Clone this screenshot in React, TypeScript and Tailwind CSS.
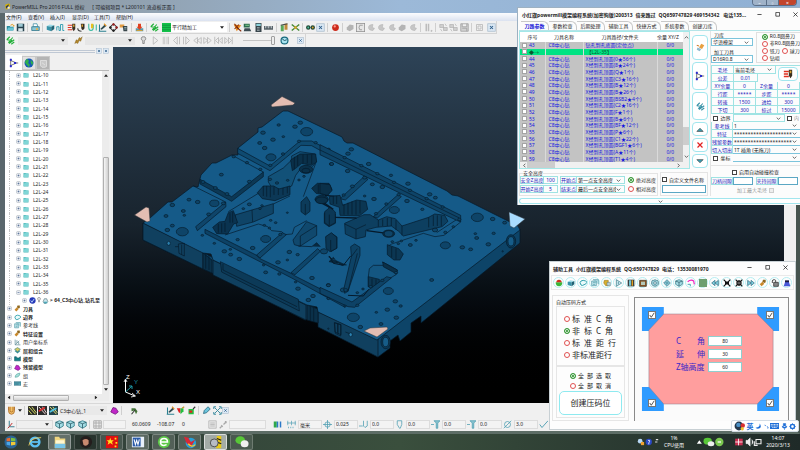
import React from "react";

/* ---------- small glyphs, all drawn on a 12 x 12 grid ---------- */

const glyphs: Record<string, React.ReactNode> = {
  logo: (
    <>
      <path d="M2 3l6-2 3 2-2 7-6 1z" fill="#d8b400" />
      <path d="M3 6l5-4v4l-4 4z" fill="#333a55" />
      <circle cx="8" cy="8" r="2" fill="#e8e8ee" />
    </>
  ),
  open: (
    <>
      <path d="M1 4h4l1 1h4v5H1z" fill="#2a8a9c" />
      <path d="M3 6h8l-2 4H1z" fill="#67c4d4" />
      <path d="M6 3q3-3 5 1l-2 0" fill="none" stroke="#e09a20" strokeWidth="1.3" />
    </>
  ),
  save: (
    <>
      <rect x="1" y="1" width="10" height="10" fill="#27424e" />
      <rect x="3" y="1" width="6" height="4" fill="#9cc8d4" />
      <rect x="3" y="7" width="6" height="4" fill="#d8e6ea" />
    </>
  ),
  print: (
    <>
      <path d="M3 1h5l1 4H3z" fill="#fff" stroke="#3c8ea4" />
      <path d="M1 5h10v5H1z" fill="#8cc7d6" stroke="#2a7388" />
      <circle cx="8" cy="8" r="1.5" fill="#e9b050" />
    </>
  ),
  block: (
    <>
      <path d="M1 4l4-2 6 1-4 2z" fill="#9ddbe8" />
      <path d="M1 4l6 1v6L1 9z" fill="#3893a8" />
      <path d="M7 5l4-2v5L7 11z" fill="#1f6274" />
    </>
  ),
  feed: <path d="M1 10V5h3v5h2V2h3v8h2" fill="none" stroke="#3aa0b4" strokeWidth="1.3" />,
  toolred: (
    <>
      <path d="M1 3h6M1 6h5M1 9h6" stroke="#e03020" strokeWidth="1.6" />
      <path d="M7 1h4v7l-2 3-2-3z" fill="#3a3022" />
      <path d="M8 2h2v3H8z" fill="#d8a030" />
    </>
  ),
  toolball: (
    <>
      <path d="M5 1h5v6q-2 4-4 1z" fill="#332c22" />
      <path d="M6 2h2v3H6z" fill="#d8a030" />
      <path d="M1 7q0 4 5 4" fill="none" stroke="#444" strokeWidth="1.5" />
    </>
  ),
  leads: (
    <>
      <path d="M1 1v5q0 4 3 4t3-4V2M11 2v8" fill="none" stroke="#38b8a0" strokeWidth="1.4" />
      <path d="M4 1h3v6H4z" fill="#e8c020" />
    </>
  ),
  axis: (
    <>
      <path d="M1 11h10M2 11V2" stroke="#2a8090" strokeWidth="1.4" />
      <path d="M3 8l6-6 2 2-6 5z" fill="#2f4b52" />
      <path d="M8 1l3 3" stroke="#e09020" strokeWidth="1.5" />
    </>
  ),
  points: (
    <>
      <path d="M6 1l5 5-5 5-5-5z" fill="none" stroke="#333" strokeWidth="1.4" />
      <circle cx="6" cy="2" r="1.6" fill="#a02020" />
      <circle cx="10" cy="6" r="1.6" fill="#a02020" />
      <circle cx="6" cy="10" r="1.6" fill="#222" />
      <circle cx="2" cy="6" r="1.6" fill="#222" />
    </>
  ),
  holder: (
    <>
      <path d="M1 2h6v4H1z" fill="#e09a40" />
      <path d="M5 4h6v7H6z" fill="#39464a" />
      <path d="M7 6h3M7 8h3" stroke="#a9c8cf" />
    </>
  ),
  drop: (
    <>
      <path d="M1 7h10v4H1z" fill="#5a98a8" />
      <path d="M4 1h4v4h2L6 9 2 5h2z" fill="#e04020" />
      <path d="M2 10h8" stroke="#d8a030" strokeWidth="1.2" />
    </>
  ),
  zig: <path d="M1 5l4-4M1 5l7 1M3 9l6-7M4 10l7-5M7 11l4-3M3 9l5-3" fill="none" stroke="#22b03a" strokeWidth="1.5" />,
  zigblue: <path d="M1 5l4-4M1 5l7 1M3 9l6-7M4 10l7-5M7 11l4-3M3 9l5-3" fill="none" stroke="#3a93a8" strokeWidth="1.5" />,
  green: (
    <>
      <rect x="0" y="0" width="12" height="12" fill="#13c14a" />
      <path d="M0 3h12M0 6h12M0 9h12" stroke="#0b7a34" strokeWidth=".7" />
    </>
  ),
  verify: (
    <>
      <path d="M1 2l10 1-6 8z" fill="#e88a20" />
      <path d="M2 1l4 6 5 4M8 2l-6 6" stroke="#8a3010" strokeWidth="1.4" />
    </>
  ),
  brush: (
    <>
      <path d="M7 1l4 2-3 5-4-2z" fill="#e8a040" />
      <path d="M2 6l5 2-2 3-4-2z" fill="#8fb8d0" />
      <path d="M1 3l3 1" stroke="#d08030" strokeWidth="1.4" />
    </>
  ),
  sim: (
    <>
      <path d="M1 1h8v5H1z" fill="#2c6d50" />
      <path d="M2 7h7l2 4H1z" fill="#3b4b52" />
      <path d="M3 3h5" stroke="#8bd490" strokeWidth="1.3" />
    </>
  ),
  calc: (
    <>
      <rect x="2" y="0" width="8" height="12" fill="#39464c" />
      <rect x="3" y="1" width="6" height="3" fill="#8ed4dc" />
      <path d="M4 6h4M4 8h4M4 10h4" stroke="#c9d4d8" strokeDasharray="1 .7" />
    </>
  ),
  ruler: (
    <>
      <rect x="0" y="4" width="12" height="5" fill="#59646a" />
      <path d="M2 4v3M4 4v2M6 4v3M8 4v2M10 4v3" stroke="#e4eaec" strokeWidth=".8" />
    </>
  ),
  pair: (
    <>
      <path d="M1 3h4v8H1z" fill="#5aa858" />
      <path d="M6 1h4v8H6z" fill="#c08a3a" />
      <path d="M1 3l9-2" stroke="#444" strokeWidth="1.4" />
    </>
  ),
  cross: (
    <>
      <path d="M1 2l10 8M11 2L1 10" stroke="#4a8a38" strokeWidth="2" />
      <circle cx="6" cy="6" r="2" fill="#d0a830" />
    </>
  ),
  binoc: (
    <>
      <circle cx="3" cy="6" r="3" fill="#234b38" />
      <circle cx="9" cy="6" r="3" fill="#234b38" />
      <circle cx="3" cy="6" r="1.2" fill="#50c0a0" />
      <circle cx="9" cy="6" r="1.2" fill="#e0a030" />
    </>
  ),
  redball: (
    <>
      <circle cx="6" cy="6" r="4.5" fill="#cc2a1a" />
      <circle cx="5" cy="4.5" r="1.5" fill="#ff9a8a" />
    </>
  ),
  ghost: <path d="M1 6l4-4 5 1v5l-5 3-4-2z" fill="#b4b4b4" />,
  moon: <path d="M8 2q-6 0-6 4t6 4l2-3-3-1z" fill="#c6c6c6" stroke="#aaa" strokeWidth=".6" />,
  curve: (
    <>
      <rect x="0.500" y="0.500" width="11" height="11" fill="#e6e6e6" stroke="#8e8e8e" />
      <path d="M9 3H5Q3 6 5 9h3" fill="none" stroke="#9a9a9a" strokeWidth="1.2" />
    </>
  ),
  ghostpair: <path d="M1 2h5v4H1zM6 6h5v4H6zM8 1l2 3M2 8l2 3" fill="#cfcfcf" stroke="#a9a9a9" strokeWidth=".8" />,
  ghostsave: <path d="M1 1h10v10H1zM3 1v4h6V1M3 7h6v4" fill="#d2d2d2" stroke="#9c9c9c" />,
  bars: <path d="M3 1v10M6 1v10M9 10l2 1" stroke="#bcbcbc" strokeWidth="2" />,
  target: <path d="M2 2h8v8H2zM4 4h4v4H4z" fill="none" stroke="#b4b4b4" />,
  closebox: (
    <>
      <rect x="1" y="1" width="10" height="10" fill="#dbe8f4" stroke="#a9bccd" />
      <path d="M4 4l4 4M8 4l-4 4" stroke="#2f5f8a" strokeWidth="1.4" />
    </>
  ),
  tool: <path d="M1 10l2-5 2 1 2-4 2 1 2-2-2 6-2-1-2 4-2-1z" fill="#b0852a" stroke="#7b5a1a" strokeWidth="0.5" />,
  bulb: <path d="M6 1a2.500 2.500 0 011 5v4H5V6a2.500 2.500 0 011-5z" fill="#ddd" stroke="#777" />,
  play: <path d="M3 1l6 5-6 5z" fill="#eee" stroke="#b2b2b2" />,
  pause: <path d="M3 1v10M5 1v10M8 1v10M10 1v10" stroke="#b8b8b8" />,
  stepb: <path d="M7 1L2 6l5 5zM10 1v10" fill="#eee" stroke="#b2b2b2" />,
  stepf: <path d="M5 1l5 5-5 5zM2 1v10" fill="#eee" stroke="#b2b2b2" />,
  rew: <path d="M6 2L1 6l5 4zM11 2L6 6l5 4z" fill="#eee" stroke="#b2b2b2" />,
  fwd: <path d="M1 2l5 4-5 4zM6 2l5 4-5 4z" fill="#eee" stroke="#b2b2b2" />,
  start: <path d="M1 1v10M6 2L2 6l4 4zM11 2L7 6l4 4z" fill="#eee" stroke="#b2b2b2" />,
  end: <path d="M11 1v10M1 2l4 4-4 4zM6 2l4 4-4 4z" fill="#eee" stroke="#b2b2b2" />,
  clock: (
    <>
      <circle cx="6" cy="6" r="4.6" fill="#a9e4f0" stroke="#17697c" strokeWidth="1.6" />
      <path d="M3 4l3 2 3-1" fill="none" stroke="#17495a" strokeWidth="1.2" />
    </>
  ),
  tree: (
    <>
      <path d="M2 1v10M2 3l7 3M2 9l7-3M9 6h2" stroke="#333" strokeWidth=".8" fill="none" />
      <rect x="1" y="1" width="2.4" height="2.4" fill="#2a2ad0" />
      <rect x="1" y="8.6" width="2.4" height="2.4" fill="#2a2ad0" />
      <rect x="6" y="4.8" width="2.4" height="2.4" fill="#2a2ad0" />
    </>
  ),
  globe: (
    <>
      <circle cx="6" cy="6" r="5.4" fill="#1656b8" />
      <path d="M3 1l3 2-1 3 2 2-1 3-3-3-2-3zM8 2l3 3-1 4-2-3z" fill="#2fae4e" />
    </>
  ),
  bin: <path d="M2 2h8v8l-2 1H4L2 9zM4 5l4 3" fill="#c9c9c9" stroke="#e6e6e6" />,
  folder: (
    <>
      <path d="M1 2h5l1 1h4v8H1z" fill="#4fb5b8" />
      <path d="M3 3h8l-1 7H1z" fill="#7fd6d6" />
    </>
  ),
  check: (
    <>
      <circle cx="6" cy="6" r="5.4" fill="#2438b8" />
      <path d="M3 6l2 3 4-6" stroke="#b8d4ff" strokeWidth="1.6" fill="none" />
    </>
  ),
  cube: (
    <>
      <path d="M2 8l2-5h4l2 5-3 3H4z" fill="#cfeaf0" stroke="#4b6870" />
      <path d="M3 8h6v3H3z" fill="#4fa8b8" />
    </>
  ),
  loop: <path d="M3 9Q0 5 3 3t7 0-1 5-6 1z" fill="#e9fafa" stroke="#249aa8" strokeWidth="1.4" />,
  pattern: <path d="M1 3h7v7H1zM3 1h8v7M3 5h4M3 8h3" fill="#bfe4ea" stroke="#4a96a4" />,
  feature: (
    <>
      <path d="M1 8l4-4 3 3-4 4z" fill="#c8882a" />
      <path d="M6 1h4v4L8 6 5 4z" fill="#8f6820" />
    </>
  ),
  wp: <path d="M2 1v9h9M2 10l7-7M5 2v5M8 5v4" fill="none" stroke="#5d8d96" strokeWidth="1.2" />,
  layers: (
    <>
      <path d="M1 7l5-3 5 3-5 4z" fill="#3a9098" />
      <path d="M1 4l5-3 5 3-5 4z" fill="#d6cc60" stroke="#3a7a80" />
    </>
  ),
  model: <path d="M1 3h3l1 2h3l3-2v7H1z" fill="#158088" stroke="#0b5560" />,
  stock: <path d="M1 8l3-6 4 1 3 5-4 3z" fill="#c026c8" stroke="#70157a" />,
  group: <path d="M2 9q0-6 8-7 0 7-8 7z" fill="#a6e0da" stroke="#4a9c98" />,
  macro: <path d="M0 3h12v6H0zM1 5h10M2 7h6" fill="#5fb0c0" stroke="#2a6475" />,
  cutter: <path d="M2 1v5q0 5 4 5t4-5V1M4 1v5q0 2 2 2t2-2V1" fill="#f4c46a" stroke="#a05a18" />,
  pal1: (
    <>
      <rect x="0" y="0" width="12" height="12" fill="#2b2b2b" />
      <path d="M1 1l9 10M5 1l6 8M1 6l4 5" stroke="#d8e060" strokeWidth="1.3" />
    </>
  ),
  pal2: (
    <>
      <rect x="0" y="0" width="12" height="12" fill="#2b2b2b" />
      <path d="M1 1l9 10M6 1l5 8" stroke="#f0d8d8" strokeWidth="1.3" />
      <path d="M1 7l8-5" stroke="#e03030" strokeWidth="2" />
    </>
  ),
  pal3: (
    <>
      <rect x="0" y="0" width="12" height="12" fill="#21404a" />
      <path d="M1 1l9 10M5 1l6 8" stroke="#e8e070" strokeWidth="1.3" />
      <path d="M1 8l9-5" stroke="#52c4e0" strokeWidth="2" />
    </>
  ),
  knock: (
    <>
      <path d="M2 3h5l3 4-2 4-2-5-4 1z" fill="#46753a" />
      <path d="M2 11l5-6" stroke="#333" strokeWidth="1.4" />
    </>
  ),
  flagrg: (
    <>
      <path d="M1 3h5v6H4z" fill="#e02020" />
      <path d="M6 3h4v4l-4 4z" fill="#22c040" />
      <path d="M8 3l3-2" stroke="#c89020" strokeWidth="1.5" />
    </>
  ),
  redg: (
    <>
      <path d="M2 4h7v7H2z" fill="#20c040" />
      <path d="M3 6h4v3H3z" fill="#e02020" />
      <path d="M8 4l3-3" stroke="#333" strokeWidth="1.5" />
    </>
  ),
  pencil: <path d="M2 10l1-4 5-5 3 3-5 5z" fill="#6cc4dc" stroke="#206078" />,
  xarrows: <path d="M2 2l8 8M10 2l-8 8M1 4V1h3M8 1h3v3M11 8v3H8M4 11H1V8" fill="none" stroke="#3c8da0" strokeWidth="1.3" />,
  csys: (
    <>
      <path d="M3 1v8h7" fill="none" stroke="#3b7d90" strokeWidth="1.3" />
      <path d="M3 9l-2 2M3 9l4-5" stroke="#c03030" strokeWidth="1.3" />
    </>
  ),
  iso: (
    <>
      <path d="M1 3l5-2 5 2v5L6 11 1 8z" fill="#a4dce4" stroke="#23707e" />
      <path d="M1 3l5 2 5-2M6 5v6" fill="none" stroke="#23505e" />
    </>
  ),
  gridg: <path d="M1 1h10v10H1zM1 4h10M1 8h10M4 1v10M8 1v10" fill="none" stroke="#a8a8a8" strokeWidth="1.2" />,
  listg: <path d="M1 1h10v10H1zM3 4h6M3 6h6M3 8h6" fill="#e4e4e4" stroke="#b4b4b4" />,
  linkg: <path d="M1 11l3-3M6 6l4-4M3 7l2 2M8 2l2 2" stroke="#a8a8a8" strokeWidth="1.6" />,
  ucolor: (
    <>
      <path d="M1 2h4v8H1z" fill="#2fa84a" />
      <path d="M5 2h2v8H5zM9 2h2v8H9z" fill="#2a78c8" />
    </>
  ),
  span: <path d="M0 4h12M1 1v6M6 1v6M11 1v6M2 9v2M5 9v2M8 9v2" stroke="#5aa4b8" fill="none" />,
  tol: <path d="M6 0v12M0 6h12M2.500 6a3.500 3.500 0 107 0 3.500 3.500 0 10-7 0" stroke="#4a9cb0" fill="none" />,
  thick: <path d="M0 8h5M6 1v7l2 2 3-2V1" stroke="#4a9cb0" fill="none" />,
  tipr: <path d="M3 1h6v5l-2 5H6L3 6z" stroke="#4a9cb0" fill="none" />,
  screwm: <path d="M0 6h4M4 1h8L9 4v7H7V4z" stroke="#4a9cb0" fill="#8cc4d0" />,
  diam: <path d="M2 6a4 4 0 108 0 4 4 0 10-8 0M1 11L11 1" stroke="#4a9cb0" fill="none" />,
  tick: <path d="M1 6l3 4 8-9" stroke="#4a9cb0" fill="none" strokeWidth="1.2" />,
  cup: (
    <>
      <path d="M1 5h10q0 6-5 6T1 5z" fill="#38b83a" />
      <path d="M2 5q0-4 4-4t4 4z" fill="#d03020" />
    </>
  ),
  hand: (
    <>
      <path d="M2 2h6v8H4L1 6z" fill="#d8b030" stroke="#7a5a10" strokeWidth=".6" />
      <path d="M6 5h5v5H6z" fill="#b8cfd4" stroke="#486068" strokeWidth=".6" />
    </>
  ),
  fan: <path d="M2 1v10M2 1l8 5-8 5M5 4v4" stroke="#2f7080" fill="#cdeff4" />,
  door: (
    <>
      <path d="M1 1h10v10H1z" fill="#3a3f40" />
      <path d="M3 2h3v8H3z" fill="#70c4d4" />
      <path d="M7 2h2v8H7z" fill="#e0a020" />
    </>
  ),
  crate: (
    <>
      <path d="M1 2h10v9H1z" fill="#8a5a28" stroke="#3a2a18" />
      <path d="M3 4h6v5H3z" fill="#b4c8b8" />
    </>
  ),
  gear: <path d="M6 1l2 1h2l1 2v4l-2 2-3 1-3-1-2-2V4l1-2h2zM4 6a2 2 0 104 0 2 2 0 10-4 0" fill="#9ed2dc" stroke="#2d6c7c" />,
  wave: <path d="M1 6l5-5 5 5-5 5zM4 6l2-2 2 2-2 2z" fill="#93d0dc" stroke="#2a6c80" />,
  magenta: (
    <>
      <path d="M1 4q5-4 9-1l1 5" stroke="#f020c0" strokeWidth="1.8" fill="none" />
      <path d="M1 8h4v3" stroke="#30a0b0" fill="none" strokeWidth="1.3" />
    </>
  ),
  gsq: <rect x="0" y="0" width="12" height="12" fill="#6d9f70" />,
  rewc: <path d="M6 2L1 6l5 4zM11 2L6 6l5 4z" fill="#7fd0e0" stroke="#2a6478" />,
  fwdc: <path d="M1 2l5 4-5 4zM6 2l5 4-5 4z" fill="#7fd0e0" stroke="#2a6478" />,
  expand: (
    <>
      <path d="M1 1l10 10M11 1L1 11" stroke="#111" strokeWidth="1.8" />
      <rect x="3" y="4" width="6" height="4" fill="#111" />
    </>
  ),
  shrink: <path d="M1 1l4 4M11 1L7 5M1 11l4-4M11 11L7 7M5 2v3H2M7 2v3h3M5 10V7H2M7 10V7h3" stroke="#111" strokeWidth="1.6" />,
  lock: (
    <>
      <path d="M4 5h7v6H4z" fill="#888" stroke="#222" />
      <path d="M2 6V3q0-2 3-2t2 4" fill="none" stroke="#222" strokeWidth="1.2" />
    </>
  ),
  hat: (
    <>
      <path d="M3 2h6v4H3z" fill="#1a1a40" />
      <path d="M1 11l2-6h6l2 6z" fill="#4858d8" />
    </>
  ),
};

function Glyph({ name, className = "size-[9px]" }: { name: string; className?: string }) {
  return (
    <svg viewBox="0 0 12 12" className={`shrink-0 ${className}`} aria-hidden="true">
      {glyphs[name]}
    </svg>
  );
}

function ToolButton({ name, className = "" }: { name: string; className?: string }) {
  return (
    <button type="button" aria-label={name} className={`flex size-[10px] shrink-0 items-center justify-center ${className}`}>
      <Glyph name={name} />
    </button>
  );
}

function ToolGroup({ names, className = "" }: { names: string[]; className?: string }) {
  return (
    <div className={`flex shrink-0 items-center justify-between ${className}`}>
      {names.map((n, i) => (
        <ToolButton key={i} name={n} />
      ))}
    </div>
  );
}

const Sep = () => <div className="mx-[2px] h-[9px] w-px shrink-0 bg-[#cfcfcf]" />;

function Arrow({ className = "" }: { className?: string }) {
  return (
    <svg viewBox="0 0 6 4" className={`pointer-events-none h-[3px] w-1 shrink-0 ${className}`} aria-hidden="true">
      <path d="M0 0h6L3 4z" fill="#222" />
    </svg>
  );
}

function Chevron() {
  return (
    <svg viewBox="0 0 8 5" className="pointer-events-none h-[3px] w-[5px] shrink-0" aria-hidden="true">
      <path d="M1 1l3 3 3-3" fill="none" stroke="#444" strokeWidth="1.3" />
    </svg>
  );
}

/* A drop-down with its own arrow */
function Drop({ label, value, className = "", chevron = false }: { label: string; value: string; className?: string; chevron?: boolean }) {
  return (
    <div className={`flex items-center overflow-hidden pr-[3px] ${className}`}>
      <select aria-label={label} defaultValue={value} className="min-w-0 flex-1 appearance-none bg-transparent pl-px outline-none">
        <option>{value}</option>
      </select>
      {chevron ? <Chevron /> : <Arrow />}
    </div>
  );
}

/* ---------- main window ---------- */

function TitleBar() {
  return (
    <header className="flex h-[13px] shrink-0 items-center gap-px bg-gradient-to-r from-[#8b959c] via-[#9cb9d8] to-[#8fb0d4] pl-1">
      <Glyph name="logo" className="size-[7px]" />
      <h1 className="whitespace-pre text-[#1c2226]">PowerMILL Pro 2016 FULL 授权{"      "}[ 可编辑项目 * L200101 流道板正面 ]</h1>
      <div className="ml-auto mr-[3px] flex h-[6px] self-start overflow-hidden rounded-b-sm border border-t-0 border-[#5b6f88] text-white">
        <button type="button" aria-label="最小化" className="w-[13px] bg-[#9fb2c8] leading-[4px]">–</button>
        <button type="button" aria-label="最大化" className="w-[13px] border-x border-[#5b6f88] bg-[#9fb2c8] leading-[4px]">▫</button>
        <button type="button" aria-label="关闭" className="w-[17px] bg-[#c2452c] leading-[4px]">×</button>
      </div>
    </header>
  );
}

function MenuBar() {
  return (
    <nav className="flex h-2 shrink-0 items-center gap-[6px] bg-gradient-to-b from-[#fbfcfe] to-[#dbe2f0] pl-px text-[#1a1a1a]">
      {["文件(F)", "查看(V)", "插入(I)", "显示(D)", "工具(T)", "帮助(H)"].map((m) => (
        <button key={m} type="button" className="w-4 shrink-0 whitespace-nowrap text-left">
          {m}
        </button>
      ))}
    </nav>
  );
}

function Toolbars() {
  return (
    <div className="flex shrink-0 flex-col bg-[#f0f0f0]">
      <div className="flex h-[13px] w-[492px] items-center border-b border-r border-[#d4d4d4]">
        <ToolGroup names={["open", "save"]} className="w-5" />
        <Sep />
        <ToolButton name="print" />
        <Sep />
        <ToolGroup names={["block", "feed", "toolred", "toolball", "leads", "axis", "points", "holder"]} className="w-[84px]" />
        <Sep />
        <ToolButton name="drop" />
        <Sep />
        <ToolGroup names={["zig", "green"]} className="w-[22px]" />
        <Drop label="策略" value="平行精加工" className="h-[10px] w-[70px] bg-white" />
        <Sep />
        <ToolGroup names={["verify", "sim", "calc", "ruler"]} className="w-[42px]" />
        <Sep />
        <ToolGroup names={["pair", "cross"]} className="w-[21px]" />
        <Sep />
        <ToolGroup names={["binoc", "closebox"]} className="w-5" />
        <Sep />
        <ToolButton name="redball" />
        <Sep />
        <ToolGroup names={["ghost", "curve", "moon", "moon", "moon", "ghost", "moon"]} className="w-[73px]" />
        <Sep />
        <ToolButton name="bars" />
        <Sep />
        <ToolGroup names={["ghostpair", "ghostpair", "ghostsave"]} className="w-[31px]" />
        <Sep />
        <ToolGroup names={["target", "closebox"]} className="w-[22px]" />
      </div>
      <div className="flex h-[13px] w-[301px] items-center border-r border-[#d4d4d4]">
        <ToolButton name="zig" />
        <Drop label="刀具路径" value="" className="ml-[3px] h-[8px] w-[50px] bg-[#e6e6e6]" />
        <ToolButton name="tool" className="ml-[5px]" />
        <Drop label="刀具" value="" className="ml-[2px] h-[8px] w-[50px] bg-[#e6e6e6]" />
        <ToolButton name="bulb" className="ml-[3px]" />
        <ToolGroup names={["play", "pause", "stepb", "stepf", "rew", "fwd", "start", "end"]} className="ml-[2px] w-[84px]" />
        <input type="range" aria-label="速度" defaultValue={100} className="ml-[9px] h-[9px] w-[32px] appearance-none bg-[linear-gradient(#c4c4c4,#c4c4c4)] bg-[length:100%_1px] bg-center bg-no-repeat [&::-webkit-slider-thumb]:h-[9px] [&::-webkit-slider-thumb]:w-1 [&::-webkit-slider-thumb]:appearance-none [&::-webkit-slider-thumb]:rounded-[1px] [&::-webkit-slider-thumb]:border [&::-webkit-slider-thumb]:border-[#a0a0a0] [&::-webkit-slider-thumb]:bg-[#eee]" />
        <ToolButton name="clock" className="ml-1" />
        <Glyph name="closebox" className="ml-auto mr-[1px] size-[7px]" />
      </div>
    </div>
  );
}

const levels = Array.from({ length: 27 }, (_, i) => `L2L-${i + 10}`);
const sections: [string, string, boolean][] = [
  ["feature", "刀具", true],
  ["loop", "边界", true],
  ["pattern", "参考线", false],
  ["feature", "特征设置", true],
  ["wp", "用户坐标系", false],
  ["layers", "层和组合", true],
  ["model", "模型", true],
  ["stock", "残留模型", true],
  ["group", "组", false],
  ["macro", "宏", false],
];

function Plus({ minus = false }: { minus?: boolean }) {
  return (
    <svg viewBox="0 0 8 8" className="size-[5px] shrink-0" aria-hidden="true">
      <rect x="1" y="1" width="6" height="6" rx="1" fill="#eef1f6" stroke="#a9b0ba" />
      <path d={minus ? "M2.500 4h3" : "M2.500 4h3M4 2.500v3"} stroke="#45608c" />
    </svg>
  );
}

function Explorer() {
  return (
    <aside className="flex w-[104px] shrink-0 flex-col bg-[#f0f0f0]">
      <div className="flex h-2 shrink-0 items-center gap-px">
        <div className="h-[3px] flex-1 border-y border-[#bfc8d4]" />
        <Glyph name="closebox" className="size-[6px]" />
        <Glyph name="closebox" className="size-[6px]" />
      </div>
      <div className="flex h-[15px] shrink-0 items-end pl-px">
        <button type="button" aria-label="资源管理器" className="flex h-[15px] w-4 items-center justify-center bg-white">
          <Glyph name="tree" className="size-[10px]" />
        </button>
        <button type="button" aria-label="浏览器" className="flex h-[14px] w-[14px] items-center justify-center border border-[#c8c8c8] bg-[#e2e2e2]">
          <Glyph name="globe" className="size-[10px]" />
        </button>
        <button type="button" aria-label="回收站" className="flex h-[14px] w-[14px] items-center justify-center border border-[#c8c8c8] bg-[#b4b4b4]">
          <Glyph name="bin" />
        </button>
      </div>
      <div className="flex min-h-0 flex-1 border-t border-[#b8b8b8] bg-white">
        <ul className="flex min-w-0 flex-1 flex-col pb-[6px] text-[#2a2a2a]">
          {levels.map((l) => (
            <li key={l} className="ml-1 flex min-h-0 flex-1 items-center border-l border-dotted border-[#c4c4c4] pl-[6px]">
              <Plus minus={l === "L2L-36"} />
              <Glyph name="folder" className="ml-[2px] size-[6px]" />
              <span className="ml-1">{l}</span>
            </li>
          ))}
          <li className="ml-1 flex min-h-0 flex-1 items-center whitespace-nowrap border-l border-dotted border-[#c4c4c4] pl-[12px] font-bold">
            <Plus />
            <Glyph name="check" className="ml-[2px] size-[7px]" />
            <Glyph name="bulb" className="size-[6px]" />
            <Glyph name="cube" className="size-[7px]" />
            <span className="ml-px">&gt; 64_C3中心钻_钻孔至</span>
          </li>
          {sections.map(([icon, label, bold]) => (
            <li key={label} className={`flex min-h-0 flex-1 items-center pl-[2px] ${bold ? "font-bold" : ""}`}>
              <Plus />
              <Glyph name={icon} className="ml-[2px] size-[7px]" />
              <span className="ml-[2px] whitespace-nowrap">{label}</span>
            </li>
          ))}
        </ul>
        <div className="relative flex w-[7px] shrink-0 flex-col items-center bg-[#ececec] py-[3px]">
          <Arrow className="rotate-180" />
          <div className="mt-[80px] w-[6px] flex-1 rounded-[1px] border border-[#b0b0b0] bg-gradient-to-r from-[#f6f6f6] to-[#d0d0d0]" />
          <Arrow className="mt-[3px]" />
        </div>
      </div>
      <div className="mb-[2px] flex h-[7px] shrink-0 items-center bg-[#ececec] px-[2px]">
        <Arrow className="rotate-90" />
        <div className="ml-[2px] h-[6px] w-[56px] rounded-[1px] border border-[#b0b0b0] bg-gradient-to-b from-[#f6f6f6] to-[#d0d0d0]" />
        <Arrow className="ml-auto mr-[9px] -rotate-90" />
      </div>
    </aside>
  );
}

/* ---------- mould plate ---------- */

const holesLeft: [number, number, number][] = [
  [545, 155, 18], [438, 232, 15], [172, 455, 18], [268, 370, 14], [422, 477, 15],
  [526, 128, 7], [510, 140, 7], [461, 135, 5], [414, 158, 7], [475, 170, 4], [444, 179, 7], [404, 189, 6], [419, 204, 7],
  [289, 284, 6], [373, 305, 6], [234, 306, 6], [271, 324, 6], [306, 342, 6], [326, 230, 5], [366, 248, 5], [406, 268, 5],
  [142, 375, 7], [192, 359, 6], [218, 366, 7], [175, 393, 6], [178, 406, 4], [123, 408, 6], [142, 437, 6], [127, 450, 7],
  [295, 370, 6], [251, 403, 6], [232, 466, 4], [338, 479, 5], [383, 504, 7], [298, 514, 7], [317, 524, 6], [343, 537, 7],
  [268, 490, 4], [316, 508, 4], [373, 373, 6], [355, 386, 4], [411, 377, 4], [405, 386, 4], [437, 421, 4], [452, 428, 4],
  [433, 444, 4], [418, 436, 4], [466, 463, 5], [487, 398, 3], [493, 516, 7], [518, 524, 5], [459, 547, 7], [487, 540, 4],
  [422, 577, 6], [463, 582, 5], [561, 594, 7], [610, 615, 6], [519, 626, 7], [564, 648, 7], [550, 660, 7], [512, 606, 4],
  [416, 555, 4], [610, 655, 4], [619, 252, 6], [611, 208, 5], [572, 188, 5], [522, 184, 5], [474, 222, 5], [436, 256, 5],
  [522, 300, 4], [537, 289, 4], [435, 298, 5], [456, 309, 5], [488, 301, 4], [597, 514, 11], [655, 630, 9],
];

const holesRight: [number, number, number][] = [
  [472, 292, 18], [376, 376, 15], [223, 270, 15], [100, 592, 18], [205, 513, 15], [206, 341, 13],
  [94, 88, 7], [84, 101, 7], [35, 132, 6], [83, 153, 7], [146, 132, 7], [124, 137, 5], [74, 113, 5], [172, 161, 5],
  [213, 166, 5], [157, 193, 6], [187, 201, 7], [264, 191, 7], [222, 187, 5], [134, 173, 6], [97, 199, 6], [71, 225, 5],
  [236, 224, 5], [162, 237, 7], [134, 228, 4], [261, 243, 7], [199, 252, 5], [168, 281, 5], [307, 268, 5], [329, 223, 7],
  [346, 233, 6], [320, 236, 5], [270, 211, 5], [368, 261, 5], [418, 298, 5], [518, 297, 7], [554, 308, 6], [521, 340, 5],
  [466, 341, 4], [470, 354, 6], [505, 373, 7], [427, 382, 7], [452, 388, 6], [335, 480, 6], [271, 375, 6], [244, 363, 4],
  [235, 371, 4], [288, 361, 4], [226, 544, 7], [242, 558, 5], [202, 569, 7], [169, 577, 4], [229, 593, 7], [183, 612, 6],
  [121, 621, 7], [25, 496, 6], [77, 510, 6], [112, 518, 4], [129, 507, 4], [152, 500, 5], [187, 481, 5], [228, 458, 5],
  [25, 536, 4], [75, 558, 4], [112, 556, 5], [376, 337, 5], [400, 320, 4], [345, 330, 8], [217, 365, 4],
];

function Holes({ list }: { list: [number, number, number][] }) {
  return (
    <g fill="#0e4468" stroke="#061c2c" strokeWidth="2">
      {list.map(([x, y, r], i) => (
        <ellipse key={i} cx={x} cy={y} rx={r} ry={r * 0.7} />
      ))}
    </g>
  );
}

function Plate() {
  return (
    <svg viewBox="113 47 671 356" preserveAspectRatio="xMinYMin slice" className="block h-full w-full" role="img" aria-label="流道板模型">
      <g stroke="#061826" strokeWidth=".7" strokeLinejoin="round">
        <path d="M143 223V240L203 269 212 273 305 320 318 317 345 340 378 357 390 348V341L398 335 400 341 411 332V323L421 316V323L520 243V229L377 338Z" fill="#0d4468" />
        <path d="M143 223V240L203 269V252ZM213 260V275L306 320V305ZM318 312V327L378 357V338Z" fill="#10405f" />
        <path d="M203 253V269L212 273V260ZM307 305V320L318 323V309Z" fill="#0a3049" />
        <path d="M283 111H288L342 137 344 141 347 143H353L447 191 452 195 458 196 518 226 520 230 377 340 318 312 317 307 307 305 213 260 211 254 203 253 143 223 150 218 168 202H172L193 186 198 187 201 175 212 163H216L232 155 238 155V148L258 132V128L262 127Z" fill="#155a88" />
      </g>

      <g transform="translate(125 80) scale(.33333)" strokeLinejoin="round" stroke="#05192a" strokeWidth="2" fill="none">
        <path d="M338 205L435 258 525 183H560L660 235V252L560 197 528 196 435 272 338 220Z" fill="#0f4a70" />
        <path d="M225 298L320 350 415 276V290L320 364 225 312Z" fill="#0c3855" />
        <path d="M320 225L415 276" />
        <path d="M302 366L303 380 217 452 212 440Z" fill="#0f456a" />
        <path d="M205 318L302 366" />
        <path d="M430 290L475 264 500 240V228L525 215 570 222 574 246 556 268 530 262 512 286 500 318 472 330 440 322 430 306Z" fill="#125178" />
        <path d="M525 222H572L575 246 560 256 530 250 512 265 502 272 497 240Z" fill="#0a3049" />
        <path d="M397 338L415 318H446L462 327 495 318V344L450 362 412 356Z" fill="#0c3856" />
        <path d="M415 318V348M425 318V350M436 320V352M447 320V345M460 327V345M474 324V345M487 321V340M508 230V268M518 226V258M534 224V250M547 224V250M560 224V252" />
        <path d="M572 250L535 350M495 348L445 372M310 395L400 340M300 465L400 432 428 440 440 452 470 455 478 464 502 462 508 442 545 422" />
        <path d="M330 405L445 371V400L385 426 335 439ZM381 390L383 426" fill="#0f4467" />
        <path d="M263 442L283 426 300 424 310 398 325 392 338 428 326 432 308 462 275 461Z" fill="#0a3350" />
        <path d="M280 432V458M290 430V458M300 428V456M315 400V428M323 396V428" />
        <path d="M560 325L577 310H612L621 328 608 346 573 340Z" fill="#0a3049" />
        <path d="M580 313V340M592 312V342M604 314V344" />
        <path d="M528 366L545 350 555 367V394L541 405 528 395ZM541 372V403M598 400L615 388 631 402V430L612 440 598 430ZM612 410V438" fill="#0c3b5a" />
        <path d="M504 480L545 425 575 437V466L525 499 508 494ZM526 468L575 437M526 468V498" fill="#10486d" />
        <path d="M603 470L620 460 636 471V504L618 515 605 500ZM618 480V512" fill="#0b3755" />
        <path d="M240 448L395 526 405 536 498 580 510 588 660 664V682L500 594 395 540 240 460Z" fill="#0d4266" />
        <path d="M395 525L472 458 484 464 405 534ZM498 578L578 506 586 514 510 584Z" fill="#0e466b" />
        <path d="M610 530L650 555H665M625 532L638 550 612 545ZM520 498L560 500 575 488 586 500" fill="#08293f" />
        <path d="M286 545L520 658 523 693 290 576Z" fill="#0c3a58" />
        <path d="M294 552V570L516 680M150 500H160M160 492L178 490V528L162 520ZM170 494V524" />
        <path d="M242 520V566M252 522V570M556 680V722M566 682V724M628 728L648 734V764L630 756ZM638 732V758" />
        <ellipse cx="543" cy="268" rx="20" ry="12" fill="#0a3049" />
        <ellipse cx="543" cy="272" rx="12" ry="7" />
        <ellipse cx="590" cy="358" rx="20" ry="12" fill="#0a3049" />
        <ellipse cx="590" cy="362" rx="12" ry="7" />
        <ellipse cx="131" cy="490" rx="5" ry="6" fill="#2a7fae" />
        <path d="M572 360L610 380 620 392M600 346L640 350" strokeWidth="4" />
        <Holes list={holesLeft} />
      </g>

      <g transform="translate(320 120) scale(.33333)" strokeLinejoin="round" stroke="#05192a" strokeWidth="2" fill="none">
        <path d="M0 74L422 286V306L408 300 0 104Z" fill="#0e4468" />
        <path d="M0 90L418 294" />
        <path d="M422 306L372 346 345 350 310 340 215 372 202 380M408 300L350 338" />
        <path d="M60 236L132 170 144 178 76 240ZM160 290L234 224 244 230 172 294Z" fill="#0e466b" />
        <path d="M28 230L60 226 68 256 110 240 138 244 143 268 118 288 60 286 58 262 30 252Z" fill="#0b3652" />
        <path d="M0 190L30 194 36 212 22 226 0 220Z" fill="#0a3049" />
        <path d="M74 310L132 284 150 284 175 300 200 290 226 296 246 318 326 292 344 282 374 286 384 304 366 320 250 348 236 334 214 318 168 322 138 330 136 350 108 357 76 342Z" fill="#0d3f60" />
        <path d="M74 312L108 328 138 314M108 328V356M175 300V320M188 298V318M202 294V318M214 294V318M228 300V330M246 318V346M326 292V322M340 286V318M352 286V318M364 288V318M72 252V284M84 248V284M96 244V284M108 242V284M120 242V280M40 228V252M50 228V252" />
        <path d="M14 275L30 262 46 276V308L28 318 14 308ZM28 284V316M17 350L34 338 50 352V385L30 395 18 384ZM32 360V392" fill="#0b3755" />
        <path d="M46 292L110 294M140 332L200 340M0 240L40 268" strokeWidth="4" />
        <ellipse cx="206" cy="341" rx="18" ry="11" fill="#0a3049" />
        <ellipse cx="5" cy="241" rx="18" ry="10" fill="#0a3049" />
        <path d="M92 380L104 372 120 382V406L84 514 74 520 72 505 94 410Z" fill="#0d4265" />
        <path d="M94 410L112 386M84 514L112 400" />
        <path d="M202 374L236 386 250 402 240 420 222 420 202 404ZM215 380V412M228 386V418" fill="#0b3652" />
        <path d="M145 470L148 446 160 436H196L188 426 232 450 228 464 178 494 162 502 145 500Z" fill="#145681" />
        <path d="M145 470L178 478V494L162 502 145 500ZM156 476V500M168 478V500" fill="#0b3652" />
        <path d="M188 426L232 450 230 462 190 440Z" fill="#0a3049" />
        <path d="M0 502L96 546 200 470 214 474 104 562 84 560 0 520Z" fill="#0d4266" />
        <path d="M28 408L40 430 70 436 92 408M84 526L130 528 146 508" strokeWidth="3" />
        <ellipse cx="573" cy="364" rx="14" ry="20" fill="#0c3a58" />
        <ellipse cx="573" cy="364" rx="9" ry="14" fill="#165c88" />
        <ellipse cx="197" cy="666" rx="14" ry="20" fill="#0c3a58" />
        <ellipse cx="197" cy="666" rx="9" ry="14" fill="#165c88" />
        <path d="M44 608L62 614V648L46 640ZM54 612V642M76 636L92 642" />
        <ellipse cx="92" cy="644" rx="5" ry="6" fill="#2a7fae" />
        <circle cx="548" cy="394" r="2" />
        <circle cx="25" cy="626" r="2" />
        <Holes list={holesRight} />
      </g>

      <g stroke="#30363c" strokeWidth=".5">
        <path d="M282 96.500L295 103 293 105 272 107 271 105Z" fill="#e3bdb2" />
        <path d="M134.500 215L146 207 149 208 150 221 147 222Z" fill="#e3bdb2" />
        <path d="M364 331L370 328 387 327 388 329 377 337Z" fill="#e3bdb2" />
        <path d="M509 212L525 219 514 228 510 226Z" fill="#a9dcff" />
      </g>

      <path d="M125.500 392V380M125.500 392L135 396" stroke="#fff" fill="none" />
      <path d="M124 382L125.500 379 127 382M132 393L135.500 396 131 397" stroke="#fff" strokeWidth=".8" fill="none" />
      <path d="M125.500 392L132 386M129 386H132V389" stroke="#1f9aa8" fill="none" />
      <g fontSize="6" fontFamily="Liberation Sans, sans-serif">
        <text x="126" y="379" fill="#fff">Z</text>
        <text x="134" y="384" fill="#1f9aa8">Y</text>
        <text x="136" y="394" fill="#fff">X</text>
      </g>
    </svg>
  );
}

function Field({ icon, value, label, className = "w-6" }: { icon: string; value: string; label: string; className?: string }) {
  return (
    <label className="flex shrink-0 items-center gap-[2px]">
      <Glyph name={icon} />
      <input aria-label={label} defaultValue={value} className={`h-[9px] border border-[#dcdcdc] bg-[#f3f3f3] px-px ${className}`} />
    </label>
  );
}

function BottomBars() {
  return (
    <div className="flex shrink-0 flex-col bg-[#f0f0f0]">
      <div className="flex h-[14px] w-[225px] items-center border-t border-[#d8d8d8] pl-px">
        <ToolButton name="cutter" />
        <Arrow className="ml-[2px]" />
        <Sep />
        <ToolGroup names={["pal1", "pal2", "pal3"]} className="w-[31px]" />
        <Drop label="刀具路径" value="C3中心钻_1" className="ml-px h-[9px] w-[51px] bg-[#e9e9e9]" />
        <ToolButton name="stock" className="ml-[2px]" />
        <Sep />
        <ToolButton name="knock" className="ml-[5px]" />
        <ToolGroup names={["axis", "flagrg", "redg"]} className="ml-[26px] w-[31px]" />
        <Sep />
        <ToolGroup names={["pencil", "xarrows"]} className="w-[21px]" />
        <Glyph name="closebox" className="ml-auto mr-px size-[7px]" />
      </div>
      <div className="flex h-[14px] items-center pl-px">
        <ToolButton name="csys" />
        <Drop label="用户坐标系" value="" className="h-[9px] w-[37px] border border-[#dadada] bg-[#efefef]" />
        <ToolGroup names={["iso", "iso", "iso"]} className="ml-px w-[33px]" />
        <Sep />
        <ToolButton name="gridg" />
        <input aria-label="网格" className="ml-px h-[9px] w-[23px] border border-[#dcdcdc] bg-[#f3f3f3]" />
        <output className="ml-[6px] w-[25px] whitespace-nowrap">60.0609</output>
        <output className="w-[25px] whitespace-nowrap">-108.07</output>
        <output className="w-[25px]">0</output>
        <ToolButton name="listg" />
        <ToolButton name="linkg" className="ml-px" />
        <input aria-label="名称" className="ml-px h-[9px] w-[37px] border border-[#dcdcdc] bg-[#f3f3f3]" />
        <ToolButton name="ucolor" className="ml-[6px]" />
        <div className="ml-[5px] flex gap-[1px]">
          <Field icon="span" value="毫米" label="单位" />
          <Field icon="tol" value="0.025" label="公差" />
          <Field icon="thick" value="0.0" label="余量" />
          <Field icon="tipr" value="0.0" label="刀尖" />
          <Field icon="screwm" value="0.0" label="径向余量" />
          <Field icon="screwm" value="0.0" label="轴向余量" />
          <Field icon="diam" value="3.0" label="直径" />
          <Glyph name="tick" />
        </div>
      </div>
    </div>
  );
}

/* ---------- tool path dialog ---------- */

const rows: [string, string][] = [
  ["43", "钻孔到孔底面(定位点)"],
  ["", "【L2L-35】"],
  ["44", "X经到孔顶面(0★56个)"],
  ["45", "X经到孔顶面(8★24个)"],
  ["46", "X经到孔顶面(Q★1个)"],
  ["47", "X经到孔顶面(C3★16个)"],
  ["48", "X经到孔顶面(B★12个)"],
  ["49", "X经到孔顶面(B★26个)"],
  ["50", "X经到孔顶面(BSB2★4个)"],
  ["51", "X经到孔顶面(C2★16个)"],
  ["52", "X经到孔顶面(F★1个)"],
  ["53", "X经到孔顶面(B★6个)"],
  ["54", "X经到孔顶面(BF★12个)"],
  ["55", "X经到孔顶面(P★6个)"],
  ["56", "X经到孔顶面(C1★22个)"],
  ["57", "X经到孔顶面(BGF1★6个)"],
  ["58", "X经到孔顶面(A★11个)"],
  ["59", "X经到孔顶面(T1★4个)"],
];

function PathTable() {
  return (
    <div className="flex w-[171px] flex-col border border-[#a4e8e8] bg-white">
      <div className="flex">
        <table className="h-[130px] w-[163px] table-fixed border-collapse bg-[#c3c3c3] text-[#1414e0]">
          <colgroup>
            <col className="w-[8px]" />
            <col className="w-[17px]" />
            <col className="w-[38px]" />
            <col className="w-[74px]" />
            <col className="w-[26px]" />
          </colgroup>
          <thead>
            <tr className="h-[10px] bg-white text-center text-[#222]">
              <th className="p-0 font-normal" colSpan={2}>序号</th>
              <th className="p-0 font-normal">刀具名称</th>
              <th className="p-0 font-normal">刀具路径/文件夹</th>
              <th className="whitespace-nowrap p-0 text-left font-normal">余量 XY/Z</th>
            </tr>
          </thead>
          <tbody>
            {rows.map(([n, path], i) => (
              <tr key={i} className={n ? "" : "bg-[#00e383]"}>
                <td className="p-0">
                  <input type="checkbox" aria-label={`选择 ${n || path}`} className="ml-[2px] block size-[5px] appearance-none border border-[#a4a4a4] bg-white" />
                </td>
                <td className={`border-r border-[#dadada] p-0 pl-px leading-[6px] ${n ? "" : "text-[#06582f]"}`}>{n || "◆→"}</td>
                <td className="border-r border-[#dadada] p-0 pl-[3px] leading-[6px]">{n && "C8中心钻"}</td>
                <td className={`whitespace-nowrap border-r border-[#dadada] p-0 leading-[6px] ${n ? "pl-[2px]" : "pl-[3px] text-[#06582f]"}`}>{path}</td>
                <td className="p-0 text-center leading-[6px]">{n && "0/0"}</td>
              </tr>
            ))}
          </tbody>
        </table>
        <div className="flex flex-1 flex-col items-center bg-[#f0f0f0] py-1">
          <div className="rotate-180">
            <Chevron />
          </div>
          <div className="mt-[88px] w-full flex-1 bg-[#cdcdcd]" />
          <div className="mt-[10px]">
            <Chevron />
          </div>
        </div>
      </div>
      <div className="flex h-[6px] items-center bg-[#f0f0f0] px-[2px]">
        <div className="rotate-90">
          <Chevron />
        </div>
        <div className="h-[6px] w-7 bg-[#cdcdcd]" />
        <div className="ml-auto mr-[6px] -rotate-90">
          <Chevron />
        </div>
      </div>
    </div>
  );
}

function Radio({ name, label, checked = false, className = "" }: { name: string; label: string; checked?: boolean; className?: string }) {
  return (
    <label className={`flex items-center gap-[2px] whitespace-pre ${className}`}>
      <input
        type="radio"
        name={name}
        defaultChecked={checked}
        className="size-[6px] shrink-0 appearance-none rounded-full border border-[#e05050] bg-white checked:border-[#3a9a3a] checked:bg-[#1d8a1d] checked:shadow-[inset_0_0_0_1px_white]"
      />
      {label}
    </label>
  );
}

function Check({ label, checked = false, className = "" }: { label: string; checked?: boolean; className?: string }) {
  return (
    <label className={`flex items-center gap-[2px] whitespace-nowrap ${className}`}>
      <input type="checkbox" defaultChecked={checked} className="size-[5px] shrink-0 appearance-none border border-[#444] bg-white" />
      {label}
    </label>
  );
}

const cell = "flex h-2 items-center justify-center overflow-hidden whitespace-nowrap border-b border-r border-[#9fe3e3]";

function Param({ label, value }: { label: string; value: string }) {
  return (
    <label className="contents">
      <span className={`${cell} text-[#2020b8]`}>{label}</span>
      <input defaultValue={value} className={`${cell} min-w-0 text-center text-[#2020b8]`} />
    </label>
  );
}

function SafeRow({ label, value, point, choice, radio, checked }: { label: string; value: string; point: string; choice: string; radio: string; checked?: boolean }) {
  return (
    <div className="flex h-2 items-center">
      <label className="flex h-2 text-[#2020b8]">
        <span className="flex w-6 items-center justify-center whitespace-nowrap border border-[#9fe3e3]">{label}</span>
        <input defaultValue={value} className="w-[14px] border border-l-0 border-[#9fe3e3] text-center" />
      </label>
      <span className="ml-[2px] flex h-2 w-[17px] items-center justify-center whitespace-nowrap border border-[#9fe3e3] text-[#2020b8]">{point}</span>
      <Drop label={point} value={choice} chevron className="h-2 w-[48px] border border-l-0 border-[#9fe3e3] text-[#111]" />
      <Radio name="height" label={radio} checked={checked} className="ml-[3px]" />
    </div>
  );
}

function WinButtons({ className = "" }: { className?: string }) {
  return (
    <div className={`flex items-center ${className}`}>
      {["M1 6h10", "M2 1h9v9H2z", "M1 1l10 10M11 1L1 11"].map((d, i) => (
        <button key={d} type="button" aria-label={["最小化", "最大化", "关闭"][i]} className="size-[5px]">
          <svg viewBox="0 0 12 12" className="size-[5px]" aria-hidden="true">
            <path d={d} fill="none" stroke="#222" strokeWidth="1.8" />
          </svg>
        </button>
      ))}
    </div>
  );
}

const bigBtn = "flex items-center justify-center rounded-[4px] border border-[#a2e6ee] bg-white";

function PathDialog() {
  return (
    <section aria-label="小红旗模架编程系统" className="absolute right-0 top-[7px] flex w-[283px] flex-col overflow-hidden border-l border-t border-[#9db1c2] bg-[#fcfcfc] pl-px text-[#222]">
      <div className="flex h-[13px] items-center pl-[3px] font-bold">
        <span className="whitespace-nowrap">小红旗powermill模架编程系统(加密狗版)200313</span>
        <span className="ml-[3px] whitespace-nowrap">倍来路过</span>
        <span className="ml-[3px] whitespace-nowrap">QQ659747829 469154342</span>
        <span className="ml-1 whitespace-nowrap">电话135...</span>
        <WinButtons className="ml-auto mr-[2px] gap-[13px]" />
      </div>
      <div role="tablist" className="flex h-[10px] border-b border-[#b4e4e8] pl-[2px]">
        {["刀路参数", "参数检查", "后期处理", "辅助工具", "快捷方式", "系统参数", "创建刀库"].map((t, i) => (
          <button key={t} role="tab" type="button" aria-selected={i === 0} className={`w-7 rounded-tr-[6px] border-r border-t border-[#c9c9c9] text-center ${i === 0 ? "font-bold text-[#2020d8]" : ""}`}>
            {t}
          </button>
        ))}
      </div>
      <div className="flex">
        <div className="flex flex-col">
          <div className="flex gap-[2px]">
            <PathTable />
            <div className="flex w-4 flex-col gap-[2px] pt-1">
              <button type="button" aria-label="刀路" className={`${bigBtn} h-[25px]`}><Glyph name="brush" /></button>
              <button type="button" aria-label="层级" className={`${bigBtn} h-7`}><Glyph name="tree" className="size-[10px]" /></button>
              <button type="button" aria-label="计算" className={`${bigBtn} h-7`}><Glyph name="zigblue" /></button>
              <button type="button" aria-label="上移" className={`${bigBtn} h-[14px]`}>
                <svg viewBox="0 0 12 8" className="h-[5px] w-2"><path d="M1 7l5-5 5 5z" fill="#3aa2b8" stroke="#333" /></svg>
              </button>
              <button type="button" aria-label="删除" className={`${bigBtn} h-[14px]`}>
                <svg viewBox="0 0 12 12" className="size-[6px]"><path d="M1 1l10 10M11 1L1 11" stroke="#e02020" strokeWidth="2.4" /></svg>
              </button>
              <button type="button" aria-label="下移" className={`${bigBtn} h-[14px]`}>
                <svg viewBox="0 0 12 8" className="h-[5px] w-2"><path d="M1 1l5 5 5-5z" fill="#3aa2b8" stroke="#333" /></svg>
              </button>
            </div>
          </div>
          <div className="flex gap-[2px] pt-px">
            <fieldset className="flex w-[139px] flex-col gap-px border border-[#e4e4e4] pb-[2px]">
              <legend className="ml-[3px] leading-[6px]">安全高度</legend>
              <SafeRow label="安全Z高度" value="100" point="开始点" choice="第一点安全高度" radio="绝对高度" checked />
              <SafeRow label="开始Z高度" value="5" point="结束点" choice="最后一点安全高度" radio="相对高度" />
            </fieldset>
            <div className="mt-[2px] flex w-[48px] flex-col justify-center gap-px border border-[#e4e4e4] px-px">
              <Check label="自定义文件名称" />
              <input aria-label="自定义文件名称" className="h-2 w-full border border-[#5ba7c4] bg-white" />
            </div>
          </div>
        </div>

        <div className="ml-[2px] flex min-w-0 flex-1 flex-col border-l border-[#e4e4e4] pt-px">
          <div className="flex gap-[3px]">
            <div className="flex w-[47px] flex-col">
              <span className="ml-[3px] leading-[6px]">刀库</span>
              <Drop label="刀库" value="华语模架" chevron className="h-[8px] border border-[#7cc4dc] bg-white" />
              <span className="ml-[3px] mt-[3px] leading-[6px]">加工刀具</span>
              <Drop label="加工刀具" value="D16R0.8" chevron className="h-[8px] border border-[#7cc4dc] bg-white" />
            </div>
            <div className="flex flex-1 flex-col justify-between border border-r-0 border-[#e0e0e0] pl-[5px] leading-[7px]">
              <Radio name="cutter" label="R0.8圆鼻刀" checked />
              <Radio name="cutter" label="非R0.8圆鼻刀" />
              <div className="flex gap-[2px]">
                <Radio name="cutter" label="铣刀" />
                <Radio name="cutter" label="球刀" />
              </div>
              <Radio name="cutter" label="钻咀" />
            </div>
          </div>
          <div className="mt-[2px] flex flex-col">
            <div className="flex border-t border-[#9fe3e3]">
              <div className="flex-1">
                <div className="grid grid-cols-[22px_1fr] border-l border-[#9fe3e3]">
                  <span className={`${cell} text-[#2020b8]`}>毛坯</span>
                  <Drop label="毛坯" value="当前毛坯" chevron className="h-2 border-b border-r border-[#9fe3e3]" />
                  <span className={`${cell} text-[#2020b8]`}>公差</span>
                  <input aria-label="公差" defaultValue="0.01" className="h-2 w-6 min-w-0 border-b border-r border-[#9fe3e3] text-center text-[#2020b8]" />
                </div>
              </div>
              <button type="button" aria-label="应用" className="mx-[2px] my-px flex w-5 items-center justify-center rounded-[4px] border border-[#a2e6ee] bg-white">
                <Glyph name="toolred" className="size-[10px]" />
              </button>
            </div>
            <div className="grid grid-cols-[22px_22px_22px_1fr] border-l border-[#9fe3e3]">
              <Param label="XY余量" value="0" />
              <Param label="Z余量" value="0" />
              <Param label="行距" value="*****" />
              <Param label="步距" value="*****" />
              <Param label="转速" value="1500" />
              <Param label="进给" value="300" />
              <Param label="下切" value="300" />
              <Param label="掠过" value="15000" />
            </div>
            <div className="grid grid-cols-[22px_1fr]">
              <Check label="边界" className="h-2 justify-center" />
              <div className="flex items-center gap-[2px]">
                <Drop label="边界" value="" chevron className="h-2 w-[52px] border border-[#9fe3e3]" />
                <Check label="内" className="text-[#999]" />
              </div>
              {[["参考线", "1"], ["特征", "***********************"], ["残留参数", "***********************"], ["切入切出", "1T 插角 (无拖刀)"]].map(([k, v]) => (
                <React.Fragment key={k}>
                  <span className={`${cell} border-l text-[#2020b8]`}>{k}</span>
                  <Drop label={k} value={v} chevron className="h-2 border-b border-[#7cc4dc]" />
                </React.Fragment>
              ))}
              <Check label="坐标" className="h-2 justify-center" />
              <Drop label="坐标" value="" chevron className="h-2 border-b border-[#7cc4dc]" />
            </div>
          </div>
          <div className="mt-[3px] flex flex-1 flex-col items-center gap-px border-t border-[#e4e4e4] pt-[2px]">
            <Check label="启用自动碰撞检查" />
            <div className="flex h-2 w-full text-[#2020b8]">
              <label className="flex flex-1">
                <span className="flex w-[22px] items-center whitespace-nowrap border border-[#9fe3e3]">刀柄间隙</span>
                <input className="w-5 border border-[#5ba7c4] bg-white" />
              </label>
              <label className="flex flex-1">
                <span className="flex w-[22px] items-center whitespace-nowrap border border-[#9fe3e3]">夹持间隙</span>
                <input className="w-5 border border-[#5ba7c4] bg-white" />
              </label>
            </div>
            <label className="flex items-center gap-[2px] text-[#999]">
              加工最大毛坯
              <input type="checkbox" className="size-[5px] appearance-none border border-[#ccc] bg-[#eee]" />
            </label>
          </div>
        </div>
      </div>
      <button type="button" aria-label="展开" className="mb-px mt-[2px] flex h-[6px] items-center justify-center rounded-l-full border border-r-0 border-[#a2e6ee] bg-white">
        <Chevron />
      </button>
    </section>
  );
}

/* ---------- helper dialog ---------- */

const helperIcons = ["cup", "block", "loop", "pattern", "hand", "fan", "door", "crate", "gear", "wave", "iso", "magenta", "gsq", "rewc", "expand", "shrink", "fwdc", "feature", "lock", "hat"];

function CornerBox({ label, className }: { label: string; className: string }) {
  return (
    <label className={`absolute flex size-[8px] items-center justify-center border border-[#777] bg-white ${className}`}>
      <input type="checkbox" defaultChecked aria-label={label} className="absolute inset-0 appearance-none" />
      <svg viewBox="0 0 8 8" className="size-[6px]" aria-hidden="true">
        <path d="M1 4l2 3 4-6" fill="none" stroke="#222" />
      </svg>
    </label>
  );
}

function HelperDialog() {
  return (
    <section aria-label="辅助工具" className="absolute bottom-[20px] right-1 flex h-[169px] w-[247px] flex-col border border-[#c8d0d4] bg-[#fdfdfd] text-[#222]">
      <div className="flex h-[13px] shrink-0 items-center gap-[3px] pl-[3px] font-bold">
        <span>辅助工具</span>
        <span>小红旗模架编程系统</span>
        <span>QQ:659747829</span>
        <span>电话：13530081970</span>
        <WinButtons className="ml-auto mr-[7px] gap-[13px] pb-[2px]" />
      </div>
      <div className="mx-px flex h-[15px] shrink-0 items-center justify-between border border-[#eaeaea] px-[1px]">
        {helperIcons.map((n) => (
          <button key={n} type="button" aria-label={n} className="flex size-[11px] items-center justify-center rounded-full border border-[#b6eef2]">
            <Glyph name={n} className="size-[8px]" />
          </button>
        ))}
      </div>
      <div className="mt-[5px] flex min-h-0 flex-1 gap-[5px] pb-2 pl-[2px] pr-[6px]">
        <div className="flex w-[77px] flex-col border border-[#e6e6e6] px-[3px] pb-[2px] pt-[3px]">
          <span className="leading-[7px]">自动压码方式</span>
          <div className="flex flex-col gap-[2px] border border-[#e6e6e6] pb-[5px] pl-[7px] pt-[7px] text-[8px] leading-[10px]">
            <Radio name="mode" label={"标\u2002准\u2002C\u2002角"} />
            <Radio name="mode" label={"非\u2002标\u2002C\u2002角"} checked />
            <Radio name="mode" label={"标\u2002准\u2002距\u2002行"} />
            <Radio name="mode" label="非标准距行" />
          </div>
          <div className="flex flex-1 flex-col border border-[#e6e6e6] px-[2px] pb-[2px] pt-1">
            <Radio name="pick" label={"全\u2002部\u2002选\u2002取"} checked className="pl-[11px] text-[6px] leading-[10px]" />
            <Radio name="pick" label={"全\u2002部\u2002取\u2002消"} className="pl-[11px] text-[6px] leading-[10px]" />
            <button type="button" className="flex-1 rounded-[5px] border border-[#8eeaf0] bg-white text-[8px] leading-none">创建压码位</button>
          </div>
        </div>
        <div className="relative mt-[2px] flex-1 border border-b-0 border-[#8a8a8a] bg-[#fbfbfb]">
          <svg viewBox="0 0 154 123" preserveAspectRatio="none" className="absolute inset-0 h-full w-full" aria-hidden="true">
            <path d="M7 9h22v24H7zM123 9h22v24h-22zM7 89h22v24H7zM123 89h22v24h-22z" fill="#2f9bff" />
            <path d="M29 16h94l16 16v57l-16 17H29L14 89V32z" fill="#ff9e9e" stroke="#8a7a8a" strokeWidth=".5" />
          </svg>
          <CornerBox label="左上" className="left-[13px] top-[13px]" />
          <CornerBox label="右上" className="right-[14px] top-[13px]" />
          <CornerBox label="左下" className="bottom-[14px] left-[13px]" />
          <CornerBox label="右下" className="bottom-[14px] right-[14px]" />
          <div className="relative ml-[41px] mt-[37px] flex flex-col gap-[2px]">
            {[["C　 角", "80"], ["延　 伸", "30"], ["Z轴高度", "60"]].map(([k, v]) => (
              <label key={k} className="flex h-[11px] items-center gap-[3px]">
                <span className="flex w-[29px] justify-between whitespace-nowrap text-[8px] leading-[10px] text-[#3a28c8]">
                  {k.split("　 ").map((part) => (
                    <span key={part}>{part}</span>
                  ))}
                </span>
                <input defaultValue={v} className="h-[10px] w-[34px] border border-[#8fcfcf] bg-white text-center" />
              </label>
            ))}
          </div>
        </div>
      </div>
    </section>
  );
}

/* ---------- input method bar and taskbar ---------- */

function ImeBar() {
  return (
    <div className="absolute bottom-[18px] right-px flex h-[12px] w-[68px] items-center justify-between rounded-[2px] border border-[#d4dce4] bg-white px-[2px] text-[#1f6fd8]">
      <svg viewBox="0 0 20 18" className="h-[10px] w-[11px]" aria-hidden="true">
        <circle cx="9" cy="9" r="8" fill="#24384e" />
        <circle cx="8" cy="7" r="4" fill="#4a90c8" />
        <circle cx="16" cy="8" r="4" fill="#d83030" />
        <circle cx="15" cy="14" r="3" fill="#f0c030" />
      </svg>
      <span className="text-[7px] font-bold leading-none">英</span>
      <svg viewBox="0 0 12 12" className="size-[7px]"><path d="M8 1q1 7-7 7 3 3 7 1t0-8z" fill="#1f6fd8" /></svg>
      <svg viewBox="0 0 12 12" className="size-[5px]"><path d="M2 2l2 3M7 6l3 2-1 3" stroke="#1f6fd8" strokeWidth="2" fill="none" /></svg>
      <svg viewBox="0 0 12 8" className="h-[6px] w-[9px]"><path d="M0 0h12v8H0z" fill="#1f6fd8" /><path d="M1 2h10M1 4h10M3 6h6" stroke="#fff" strokeDasharray="1.500 .6" /></svg>
      <svg viewBox="0 0 12 12" className="size-[7px]"><path d="M4 1h4v6H4zM2 5q0 4 4 4t4-4M6 9v3" fill="#1f6fd8" stroke="#1f6fd8" /></svg>
      <svg viewBox="0 0 12 12" className="size-[7px]"><circle cx="6" cy="6" r="3.600" fill="none" stroke="#1f6fd8" strokeWidth="2" /><path d="M6 0v12M0 6h12M2 2l8 8M10 2l-8 8" stroke="#1f6fd8" /><circle cx="6" cy="6" r="2" fill="#fff" /></svg>
    </div>
  );
}

const apps: [string, React.ReactNode, string][] = [
  ["开始", <><circle cx="8" cy="8" r="7.500" fill="#2a6494" /><path d="M3 4l4-1v4H3z" fill="#e86a30" /><path d="M8 3l5 1v3H8z" fill="#7cc040" /><path d="M3 8h4v4l-4-1z" fill="#4aa8e8" /><path d="M8 8h5v3l-5 1z" fill="#f0c838" /></>, ""],
  ["Internet Explorer", <><circle cx="8" cy="8" r="5" fill="none" stroke="#5cc0f4" strokeWidth="2.800" /><path d="M4 8h9" stroke="#5cc0f4" strokeWidth="2" /><path d="M1 12Q2 3 15 3" fill="none" stroke="#e8d060" /></>, ""],
  ["文件夹", <><path d="M2 2h5l1 2h6v11H2z" fill="#f0d680" /><path d="M3 6h10v4H3z" fill="#fff6d0" /><path d="M2 10h12v5H2z" fill="#78c4e8" /></>, "bg-white/25 border-white/30"],
  ["相册", <><circle cx="8" cy="8" r="7" fill="#241d1d" /><path d="M4 6q4-3 7 0v4q-3 4-6 1z" fill="#c88a70" /></>, "bg-black/20 border-white/20"],
  ["国旗", <><path d="M1 1h14v14H1z" fill="#e01010" /><path d="M6 3l1 3h3L8 8l1 3-3-2-3 2 1-3-2-2h3z" fill="#ffe020" /><path d="M11 3h2v2h-2zM12 8h2v2h-2zM11 12h2v2h-2z" fill="#ffe020" /></>, "bg-white/10 border-white/20"],
  ["Word", <><path d="M1 2h14v12H1z" fill="#e8f0fa" /><path d="M2 3h9v10H2z" fill="#2a5aa8" /><path d="M3.500 5l1.500 6 1.500-5 1.500 5 1.500-6" fill="none" stroke="#fff" strokeWidth="1.200" /></>, "bg-white/20 border-white/25"],
  ["浏览器", <><circle cx="8" cy="8" r="7" fill="#5cc848" /><path d="M4 8h8q0-4-4-4t-4 4 4 4l3-1" fill="none" stroke="#fff" strokeWidth="1.800" /></>, "bg-white/15 border-white/25"],
  ["UG", <><circle cx="9" cy="9" r="6" fill="#28a0d8" /><path d="M1 2l5 1 3 5 5-3-5 9-5-5z" fill="#d82838" /><path d="M6 10q4 5 8 1" stroke="#f0d030" strokeWidth="1.500" fill="none" /></>, "bg-white/15 border-white/25"],
  ["PowerMILL", <><path d="M9 1h5v14H8z" fill="#e8c818" /><path d="M9 4l5 2M9 8l5 2" stroke="#222" strokeWidth="1.500" /><circle cx="6" cy="9" r="4.500" fill="#b8bcc4" stroke="#444" /></>, "bg-white/55 border-white/60"],
  ["微信", <><ellipse cx="6" cy="6" rx="5.500" ry="4.500" fill="#58c838" /><ellipse cx="11" cy="10" rx="4.500" ry="4" fill="#f0f0f0" /></>, "bg-white/10 border-white/20"],
];

function Taskbar() {
  return (
    <footer className="flex h-4 shrink-0 items-center bg-gradient-to-r from-[#2f3d38] via-[#3a4f3d] to-[#1f2a28] text-white">
      <div className="flex gap-[3px]">
        {apps.map(([name, art, look]) => (
          <button key={name} type="button" aria-label={name} className={`flex h-4 items-center justify-center rounded-[2px] border ${look ? `w-[23px] ${look}` : "w-[21px] border-transparent"}`}>
            <svg viewBox="0 0 16 16" className="size-[14px]" aria-hidden="true">{art}</svg>
          </button>
        ))}
      </div>
      <div className="ml-auto flex items-center pr-1">
        <svg viewBox="0 0 28 10" className="h-2 w-[22px]" aria-hidden="true">
          <circle cx="4" cy="4" r="3" fill="#b8d8f4" /><path d="M5 5h4v4H5z" fill="#f0a030" />
          <circle cx="15" cy="5" r="4" fill="#2a48c8" /><path d="M14 3q3-1 2 2l-1 1v2" stroke="#fff" fill="none" />
          <path d="M24 2h3M23 5h3" stroke="#ddd" strokeWidth="1.500" />
        </svg>
        <div className="ml-1 mr-[6px] w-[22px] whitespace-nowrap text-center leading-[7px]">
          <div>1%</div>
          <div>CPU使用</div>
        </div>
        <svg viewBox="0 0 80 12" className="ml-[4px] h-[10px] w-[67px]" aria-hidden="true">
          <path d="M2 8l3-4 3 4z" fill="#fff" />
          <ellipse cx="15" cy="5" rx="5" ry="4" fill="#58c838" /><ellipse cx="19" cy="8" rx="4" ry="3" fill="#eee" />
          <circle cx="29" cy="6" r="5" fill="#7cc850" /><path d="M27 6h4" stroke="#fff" strokeWidth="1.500" />
          <path d="M48 2h9v8h-9z" fill="#c83050" /><path d="M48 6h9M52 2v8" stroke="#fff" />
          <path d="M61 4h2l3-3v10l-3-3h-2zM68 3q3 3 0 6" fill="#eee" stroke="#eee" strokeWidth=".6" />
          <path d="M73 3h6v5h-6zM71 5v5h4" fill="none" stroke="#eee" strokeWidth="1.300" />
        </svg>
        <div className="ml-[2px] mr-1 w-7 text-center leading-[7px]">
          <div>14:07</div>
          <div>2020/3/13</div>
        </div>
      </div>
    </footer>
  );
}

export default function App() {
  return (
    <div className="relative flex h-screen w-full flex-col overflow-hidden bg-[#39463f] font-['Noto_Sans','Noto_Sans_CJK_SC',sans-serif] text-[5px] leading-[8px] text-[#222]">
      <main className="flex min-h-0 flex-1 flex-col">
        <TitleBar />
        <div className="flex min-h-0 flex-1 flex-col border-b-[3px] border-l-[5px] border-r-4 border-b-[#5d6d66] border-l-[#5a676c] border-r-[#46544f] bg-[#f0f0f0]">
          <MenuBar />
          <Toolbars />
          <div className="flex min-h-0 flex-1">
            <Explorer />
            <div className="ml-1 min-w-0 flex-1 bg-gradient-to-b from-[#2e4458] via-[#18232d] to-black">
              <Plate />
            </div>
            <div className="w-3 shrink-0 bg-[#f0f0f0]" />
          </div>
          <BottomBars />
        </div>
      </main>
      <Taskbar />
      <PathDialog />
      <HelperDialog />
      <ImeBar />
    </div>
  );
}
